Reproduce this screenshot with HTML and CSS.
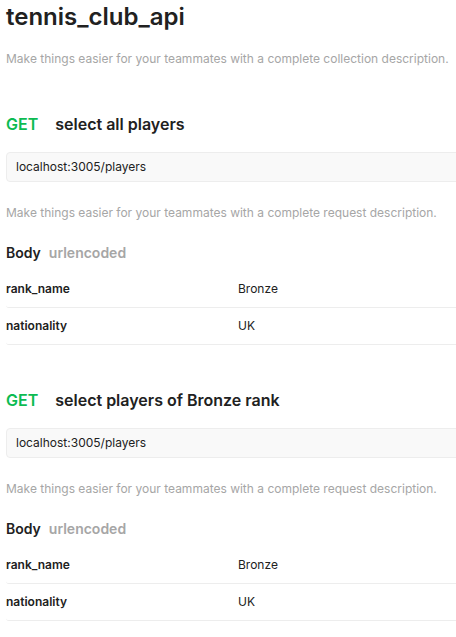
FILE: index.html
```html
<!DOCTYPE html>
<html lang="en">
<head>
<meta charset="utf-8">
<title>tennis_club_api</title>
<link rel="stylesheet" href="styles.css">
</head>
<body>
<div class="page">
  <h1 class="title">tennis_club_api</h1>
  <p class="desc">Make things easier for your teammates with a complete collection description.</p>

  <section class="request">
    <h2 class="req-head"><span class="method">GET</span><span class="req-name">select all players</span></h2>
    <div class="url">localhost:3005/players</div>
    <p class="desc req-desc">Make things easier for your teammates with a complete request description.</p>
    <h3 class="body-head">Body<span class="body-type">urlencoded</span></h3>
    <div class="params">
      <div class="param"><span class="key">rank_name</span><span class="val">Bronze</span></div>
      <div class="param"><span class="key">nationality</span><span class="val">UK</span></div>
    </div>
  </section>

  <section class="request">
    <h2 class="req-head"><span class="method">GET</span><span class="req-name">select players of Bronze rank</span></h2>
    <div class="url">localhost:3005/players</div>
    <p class="desc req-desc">Make things easier for your teammates with a complete request description.</p>
    <h3 class="body-head">Body<span class="body-type">urlencoded</span></h3>
    <div class="params">
      <div class="param"><span class="key">rank_name</span><span class="val">Bronze</span></div>
      <div class="param"><span class="key">nationality</span><span class="val">UK</span></div>
    </div>
  </section>
</div>
</body>
</html>
```
FILE: styles.css
```css
html, body {
  margin: 0;
  padding: 0;
  overflow: hidden;
  background: #ffffff;
}
body {
  font-family: Inter, "Noto Sans", sans-serif;
  color: #212121;
}
.page {
  width: 640px;
  padding: 2px 0 0 6px;
}
.title {
  margin: 0;
  font-size: 24px;
  line-height: 30px;
  font-weight: 600;
  color: #212121;
}
.desc {
  margin: 17px 0 0;
  font-size: 12px;
  line-height: 20px;
  color: #a6a6a6;
}
.request {
  margin-top: 43px;
}
.request + .request {
  margin-top: 43px;
}
.req-head {
  margin: 0;
  display: flex;
  gap: 17px;
  font-size: 16px;
  line-height: 24px;
  font-weight: 600;
  color: #212121;
}
.method {
  color: #0cbb52;
}
.url {
  margin-top: 16px;
  border: 1px solid #ededed;
  border-radius: 4px;
  background: #f9f9f9;
  padding: 0 9px;
  font-size: 12px;
  line-height: 28px;
  color: #212121;
}
.req-desc {
  margin-top: 21px;
}
.body-head {
  margin: 20px 0 0;
  font-size: 14px;
  line-height: 20px;
  font-weight: 600;
  color: #212121;
  display: flex;
  gap: 8px;
}
.body-type {
  color: #a6a6a6;
}
.params {
  margin-top: 8px;
}
.param {
  display: grid;
  grid-template-columns: 232px 1fr;
  padding: 10px 0;
  border-bottom: 1px solid #ededed;
  border-radius: 0 0 0 3px;
  font-size: 12px;
  line-height: 16px;
}
.key {
  font-weight: 600;
  color: #212121;
}
.val {
  color: #212121;
}
```
